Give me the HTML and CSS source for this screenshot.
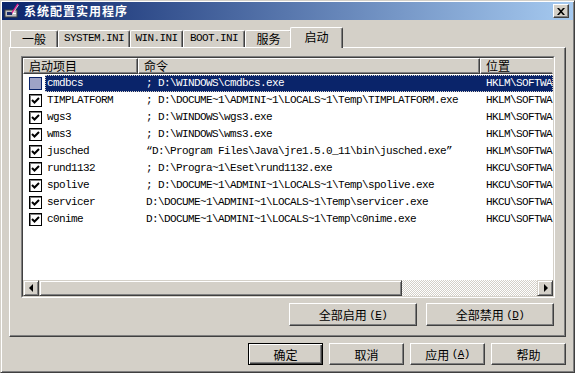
FILE: index.html
```html
<!DOCTYPE html>
<html lang="zh-CN">
<head>
    <meta charset="UTF-8">
    <title>系统配置实用程序</title>
    <link rel="stylesheet" href="styles.css">
</head>
<body>
<div class="window">
    <div class="titlebar">
        <svg class="app-icon" width="16" height="16" viewBox="0 0 16 16">
            <rect x="1" y="7" width="12" height="7" fill="#c0c0c0" stroke="#404040"/>
            <rect x="3" y="9" width="5" height="3" fill="#1a2a6a"/>
            <rect x="9" y="10" width="3" height="1" fill="#fff"/>
            <line x1="8" y1="10" x2="14" y2="1" stroke="#e0208a" stroke-width="1.5"/>
            <line x1="9" y1="10" x2="14.5" y2="2" stroke="#fff" stroke-width="0.7"/>
        </svg>
        <span class="title">系统配置实用程序</span>
        <span class="close">
            <svg width="8" height="7" viewBox="0 0 8 7">
                <path d="M0 0h2l2 2.2 2-2.2h2l-3 3.5 3 3.5h-2l-2-2.2-2 2.2h-2l3-3.5z" fill="#000"/>
            </svg>
        </span>
    </div>

    <div class="tabs">
        <div class="tab w-general">一般</div>
        <div class="tab w-system mono">SYSTEM.INI</div>
        <div class="tab w-win mono">WIN.INI</div>
        <div class="tab w-boot mono">BOOT.INI</div>
        <div class="tab w-service">服务</div>
        <div class="tab active">启动</div>
    </div>

    <div class="panel">
        <div class="listview">
            <div class="listview-inner">
                <div class="header">
                    <div class="head-cell c1">启动项目</div>
                    <div class="head-cell c2">命令</div>
                    <div class="head-cell c3">位置</div>
                </div>
                <div class="rows">
                    <div class="row selected">
                        <span class="check mixed"></span>
                        <div class="cells">
                            <span class="cell c1 mono">cmdbcs</span>
                            <span class="cell c2 mono">; D:\WINDOWS\cmdbcs.exe</span>
                            <span class="cell c3 mono">HKLM\SOFTWA</span>
                        </div>
                    </div>
                    <div class="row">
                        <span class="check"><svg width="9" height="9" viewBox="0 0 9 9"><polyline points="1,4 3.5,6.5 8,2" fill="none" stroke="#000" stroke-width="2"/></svg></span>
                        <div class="cells">
                            <span class="cell c1 mono">TIMPLATFORM</span>
                            <span class="cell c2 mono">; D:\DOCUME~1\ADMINI~1\LOCALS~1\Temp\TIMPLATFORM.exe</span>
                            <span class="cell c3 mono">HKLM\SOFTWA</span>
                        </div>
                    </div>
                    <div class="row">
                        <span class="check"><svg width="9" height="9" viewBox="0 0 9 9"><polyline points="1,4 3.5,6.5 8,2" fill="none" stroke="#000" stroke-width="2"/></svg></span>
                        <div class="cells">
                            <span class="cell c1 mono">wgs3</span>
                            <span class="cell c2 mono">; D:\WINDOWS\wgs3.exe</span>
                            <span class="cell c3 mono">HKLM\SOFTWA</span>
                        </div>
                    </div>
                    <div class="row">
                        <span class="check"><svg width="9" height="9" viewBox="0 0 9 9"><polyline points="1,4 3.5,6.5 8,2" fill="none" stroke="#000" stroke-width="2"/></svg></span>
                        <div class="cells">
                            <span class="cell c1 mono">wms3</span>
                            <span class="cell c2 mono">; D:\WINDOWS\wms3.exe</span>
                            <span class="cell c3 mono">HKLM\SOFTWA</span>
                        </div>
                    </div>
                    <div class="row">
                        <span class="check"><svg width="9" height="9" viewBox="0 0 9 9"><polyline points="1,4 3.5,6.5 8,2" fill="none" stroke="#000" stroke-width="2"/></svg></span>
                        <div class="cells">
                            <span class="cell c1 mono">jusched</span>
                            <span class="cell c2 mono">“D:\Program Files\Java\jre1.5.0_11\bin\jusched.exe”</span>
                            <span class="cell c3 mono">HKLM\SOFTWA</span>
                        </div>
                    </div>
                    <div class="row">
                        <span class="check"><svg width="9" height="9" viewBox="0 0 9 9"><polyline points="1,4 3.5,6.5 8,2" fill="none" stroke="#000" stroke-width="2"/></svg></span>
                        <div class="cells">
                            <span class="cell c1 mono">rund1132</span>
                            <span class="cell c2 mono">; D:\Progra~1\Eset\rund1132.exe</span>
                            <span class="cell c3 mono">HKCU\SOFTWA</span>
                        </div>
                    </div>
                    <div class="row">
                        <span class="check"><svg width="9" height="9" viewBox="0 0 9 9"><polyline points="1,4 3.5,6.5 8,2" fill="none" stroke="#000" stroke-width="2"/></svg></span>
                        <div class="cells">
                            <span class="cell c1 mono">spolive</span>
                            <span class="cell c2 mono">; D:\DOCUME~1\ADMINI~1\LOCALS~1\Temp\spolive.exe</span>
                            <span class="cell c3 mono">HKCU\SOFTWA</span>
                        </div>
                    </div>
                    <div class="row">
                        <span class="check"><svg width="9" height="9" viewBox="0 0 9 9"><polyline points="1,4 3.5,6.5 8,2" fill="none" stroke="#000" stroke-width="2"/></svg></span>
                        <div class="cells">
                            <span class="cell c1 mono">servicer</span>
                            <span class="cell c2 mono">D:\DOCUME~1\ADMINI~1\LOCALS~1\Temp\servicer.exe</span>
                            <span class="cell c3 mono">HKCU\SOFTWA</span>
                        </div>
                    </div>
                    <div class="row">
                        <span class="check"><svg width="9" height="9" viewBox="0 0 9 9"><polyline points="1,4 3.5,6.5 8,2" fill="none" stroke="#000" stroke-width="2"/></svg></span>
                        <div class="cells">
                            <span class="cell c1 mono">c0nime</span>
                            <span class="cell c2 mono">D:\DOCUME~1\ADMINI~1\LOCALS~1\Temp\c0nime.exe</span>
                            <span class="cell c3 mono">HKCU\SOFTWA</span>
                        </div>
                    </div>
                </div>
                <div class="hscroll">
                    <span class="sb-btn"><span class="arrow-left"></span></span>
                    <span class="sb-thumb"></span>
                    <span class="sb-track"></span>
                    <span class="sb-btn"><span class="arrow-right"></span></span>
                </div>
            </div>
        </div>
        <div class="panel-buttons">
            <div class="btn wide">全部启用 <span class="mono">(<u>E</u>)</span></div>
            <div class="btn wide">全部禁用 <span class="mono">(<u>D</u>)</span></div>
        </div>
    </div>

    <div class="dialog-buttons">
        <div class="btn default">确定</div>
        <div class="btn">取消</div>
        <div class="btn">应用 <span class="mono">(<u>A</u>)</span></div>
        <div class="btn">帮助</div>
    </div>
</div>
</body>
</html>
```

FILE: styles.css
```css
*{
    margin:0;
    padding:0;
    box-sizing:border-box;
}
body{
    background:#d4d0c8;
    font-family:"Noto Sans CJK SC","Liberation Sans",sans-serif;
    font-size:12px;
    color:#000;
}
.mono{
    font-family:"Liberation Mono","Noto Sans CJK SC",monospace;
    font-size:11px;
    letter-spacing:-0.6px;
}

/* window frame */
.window{
    width:575px;
    height:373px;
    padding:1px;
    background:#d4d0c8;
    border:1px solid;
    border-color:#d4d0c8 #404040 #404040 #d4d0c8;
    box-shadow:inset 1px 1px #fff,inset -1px -1px #808080;
}
.titlebar{
    display:flex;
    align-items:center;
    height:18px;
    padding-left:2px;
    background:linear-gradient(to right,#0a246a,#a6caf0);
    color:#fff;
}
.app-icon{
    flex:none;
    margin-right:4px;
}
.title{
    font-weight:bold;
    letter-spacing:1px;
    line-height:18px;
}
.close{
    display:flex;
    align-items:center;
    justify-content:center;
    width:16px;
    height:14px;
    margin-left:auto;
    margin-right:4px;
    background:#d4d0c8;
    border:1px solid;
    border-color:#fff #404040 #404040 #fff;
    box-shadow:inset -1px -1px #808080;
}

/* tabs */
.tabs{
    display:flex;
    align-items:flex-end;
    height:20px;
    margin:7px 0 0 8px;
}
.tab{
    height:17px;
    line-height:15px;
    text-align:center;
    border:1px solid;
    border-bottom:none;
    border-color:#fff #404040 #fff #fff;
    border-radius:2px 2px 0 0;
    box-shadow:inset -1px 0 #808080;
}
.w-general{width:48px;}
.w-system{width:72px;}
.w-win{width:53px;}
.w-boot{width:62px;}
.w-service{width:47px;}
.tab.active{
    position:relative;
    z-index:1;
    width:53px;
    height:21px;
    margin:0 0 -1px -2px;
    line-height:17px;
    background:#d4d0c8;
}

/* tab page */
.panel{
    width:557px;
    height:290px;
    margin-left:7px;
    padding:8px 10px 0 11px;
    border:1px solid;
    border-color:#fff #404040 #404040 #fff;
    box-shadow:inset -1px -1px #808080;
}
.listview{
    width:534px;
    height:242px;
    border:1px solid;
    border-color:#808080 #fff #fff #808080;
}
.listview-inner{
    display:flex;
    flex-direction:column;
    height:100%;
    overflow:hidden;
    background:#fff;
    border:1px solid;
    border-color:#404040 #d4d0c8 #d4d0c8 #404040;
}
.header{
    display:flex;
    flex:none;
    height:16px;
}
.head-cell{
    flex:none;
    padding-left:5px;
    line-height:14px;
    background:#d4d0c8;
    border:1px solid;
    border-color:#fff #404040 #404040 #fff;
    box-shadow:inset -1px -1px #808080;
}
.head-cell.c1{width:115px;}
.head-cell.c2{width:342px;}
.head-cell.c3{
    flex:1;
    border-right-color:#d4d0c8;
    box-shadow:inset 0 -1px #808080;
}

.rows{
    flex:1;
    padding-top:1px;
}
.row{
    display:flex;
    align-items:center;
    height:17px;
}
.check{
    flex:none;
    display:flex;
    align-items:center;
    justify-content:center;
    width:13px;
    height:13px;
    margin-left:6px;
    background:#fff;
    border:1px solid #000;
    box-shadow:inset 1px 1px #808080;
}
.check.mixed{
    background:#9ea3c6;
    border-color:#0a246a;
    box-shadow:none;
}
.cells{
    display:flex;
    flex:1;
    height:17px;
    margin-left:3px;
    white-space:nowrap;
}
.cell{
    flex:none;
    line-height:17px;
}
.cell.c1{width:93px;padding-left:2px;}
.cell.c2{width:342px;padding-left:8px;}
.cell.c3{flex:1;padding-left:6px;}
.row.selected .cells{
    background:#0a246a;
    color:#fff;
    outline:1px dotted #d4d0c8;
    outline-offset:-1px;
}

/* horizontal scrollbar */
.hscroll{
    display:flex;
    flex:none;
    height:16px;
}
.sb-btn,.sb-thumb{
    flex:none;
    display:flex;
    align-items:center;
    justify-content:center;
    width:16px;
    height:16px;
    background:#d4d0c8;
    border:1px solid;
    border-color:#d4d0c8 #404040 #404040 #d4d0c8;
    box-shadow:inset 1px 1px #fff,inset -1px -1px #808080;
}
.sb-thumb{
    width:363px;
}
.sb-track{
    flex:1;
    background:repeating-conic-gradient(#d4d0c8 0 25%,#fff 0 50%) 0 0/2px 2px;
}
.arrow-left{
    border-top:4px solid transparent;
    border-bottom:4px solid transparent;
    border-right:4px solid #000;
    margin-left:-1px;
}
.arrow-right{
    border-top:4px solid transparent;
    border-bottom:4px solid transparent;
    border-left:4px solid #000;
    margin-left:1px;
}

/* buttons */
.panel-buttons{
    display:flex;
    justify-content:flex-end;
    gap:9px;
    margin-top:5px;
    padding-right:1px;
}
.btn{
    display:flex;
    align-items:center;
    justify-content:center;
    width:75px;
    height:22px;
    background:#d4d0c8;
    border:1px solid;
    border-color:#fff #404040 #404040 #fff;
    box-shadow:inset -1px -1px #808080;
    white-space:pre;
}
.btn.wide{
    width:128px;
    height:23px;
}
.btn.default{
    border-color:#000;
    box-shadow:inset 1px 1px #fff,inset -1px -1px #404040,inset -2px -2px #808080;
}
.btn u{
    text-decoration:underline;
}
.dialog-buttons{
    display:flex;
    justify-content:flex-end;
    gap:6px;
    margin-top:6px;
    padding-right:7px;
}
```
